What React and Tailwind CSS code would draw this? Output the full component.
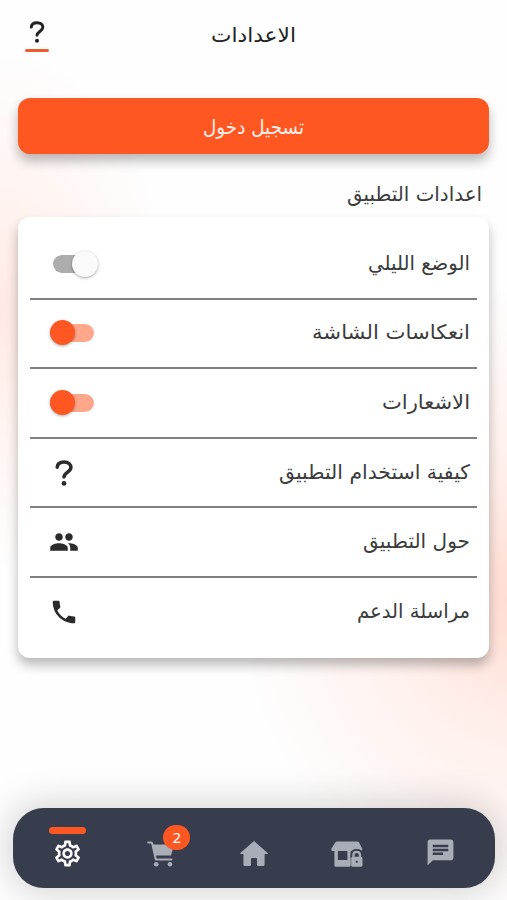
import { MdPeople, MdPhone, MdChat, MdOutlineSettings } from "react-icons/md";

function Txt({ children, className, w }) {
  return (
    <svg className={className} width={w} height="40" overflow="visible">
      <text x={w} y="26" direction="rtl" textAnchor="start" textLength={w} lengthAdjust="spacingAndGlyphs" fill="currentColor">{children}</text>
    </svg>
  );
}

function Question({ className }) {
  return (
    <svg className={className} viewBox="0 0 18 26" fill="none" stroke="currentColor" strokeWidth="3.5" strokeLinecap="round">
      <path d="M2.200 7.200C2.500 3.800 5 2 9 2c4.300 0 6.900 2.300 6.900 5.500 0 4.600-6.900 5.200-6.900 9.400" />
      <circle cx="9" cy="23.400" r="2.400" fill="currentColor" stroke="none" />
    </svg>
  );
}

function Switch({ off }) {
  return (
    <div className={off ? "relative ml-[3px] h-[18px] w-[44px] rounded-full bg-[#adadad]" : "relative h-[18px] w-[44px] rounded-full bg-[#ffa78b]"}>
      <div className={off ? "absolute right-[-1px] -top-1 size-[26px] rounded-full bg-[#fafafa] shadow-[0_1px_3px_rgba(0,0,0,0.35)]" : "absolute left-0 -top-1 size-[25px] rounded-full bg-[#ff5722] shadow-[0_1px_3px_rgba(0,0,0,0.35)]"} />
    </div>
  );
}

function Cart() {
  return (
    <svg className="h-[26px] w-[28px]" viewBox="0 0 28 26" fill="none" stroke="currentColor" strokeWidth="2" strokeLinecap="round" strokeLinejoin="round">
      <path d="M1.200 1.500h2.600q1.200 0 1.500 1.200L8.800 18.500H24.500" />
      <path d="M5.800 4.300H26L23.500 13.800H8.200Z" fill="currentColor" strokeWidth="1.500" />
      <circle cx="9.200" cy="23.200" r="2.300" fill="currentColor" stroke="none" />
      <circle cx="23" cy="23.200" r="2.300" fill="currentColor" stroke="none" />
    </svg>
  );
}

function Home() {
  return (
    <svg className="h-[25px] w-[28px]" viewBox="0 0 28 25" fill="currentColor">
      <path d="M14 0 27.600 12q.8 1-.6 1.100H24.600V23.500q0 1.500-1.500 1.500h-5q-1.100 0-1.100-1.100V18q0-1-1-1h-4q-1 0-1 1v5.900q0 1.100-1.100 1.100h-5q-1.500 0-1.500-1.500V13.100H1q-1.400-.1-.6-1.100Z" />
    </svg>
  );
}

function LockedStore() {
  return (
    <svg className="h-[26px] w-[32px]" viewBox="0 0 32 26">
      <path fill="currentColor" d="M6 .5h20q1.400 0 2.200 1.200L31.100 7.500q.8 2.500-1.600 2.500H2Q-.4 10 .5 7.500L4 1.700Q4.700.5 6 .5ZM3.400 10H6.900v9h9.500v-9h3.300v14.300q0 1.400-1.400 1.400H4.900q-1.500 0-1.500-1.500Z" />
      <path fill="none" stroke="#383d4d" strokeWidth="4.500" d="M21.800 17v-3.300q0-3.500 3.900-3.500t3.900 3.500V17" />
      <path fill="none" stroke="currentColor" strokeWidth="2.200" d="M22.400 17v-3q0-3.200 3.300-3.200t3.300 3.200v3" />
      <rect x="20.200" y="15.800" width="11.300" height="10" rx="1.600" fill="currentColor" />
      <circle cx="25.800" cy="20.800" r="1.100" fill="#383d4d" />
    </svg>
  );
}

const rows = [
  ["الوضع الليلي", 102, <Switch off />],
  ["انعكاسات الشاشة", 158, <Switch />],
  ["الاشعارات", 88, <Switch />],
  ["كيفية استخدام التطبيق", 191, <Question className="ml-[5px] h-[26px] w-[18px]" />],
  ["حول التطبيق", 107, <MdPeople className="-ml-px size-[30px]" />],
  ["مراسلة الدعم", 113, <MdPhone className="-ml-px size-[30px]" />],
];

export default function App() {
  return (
    <div className="flex h-[900px] w-[507px] flex-col overflow-hidden bg-[#fefefe] bg-[radial-gradient(ellipse_170px_260px_at_0px_310px,#ffe9e4,#fff4f1_45%,transparent),radial-gradient(ellipse_280px_310px_at_520px_600px,#ffdbd1,#ffefeb_42%,transparent)] font-['DejaVu_Sans',sans-serif] text-[20px] text-[#3c3c3c]">
      <header className="flex h-[70px] shrink-0 items-start justify-between px-[25px] pt-[16px] text-[#222]">
        <div className="flex w-6 flex-col items-center pt-[5px]">
          <Question className="h-[22px] w-[16px]" />
          <div className="mt-[6px] h-[3px] w-6 rounded bg-[#f15a2e]" />
        </div>
        <Txt w={85}>الاعدادات</Txt>
        <div className="w-6" />
      </header>
      <button className="mx-[18px] mt-[28px] flex h-[56px] shrink-0 items-center justify-center rounded-[12px] bg-[#ff5722] pt-[3px] text-white/90 shadow-[0_7px_12px_rgba(0,0,0,0.28)]">
        <Txt w={101}>تسجيل دخول</Txt>
      </button>
      <div className="mt-[21px] flex h-[42px] shrink-0 justify-end pr-[25px]">
        <Txt w={135}>اعدادات التطبيق</Txt>
      </div>
      <main className="mx-[18px] h-[441px] shrink-0 rounded-[12px] bg-white px-[12px] pt-[13px] text-[#3c3c3c] shadow-[0_7px_12px_rgba(0,0,0,0.28)]">
        {rows.map(([label, w, control], i) => (
          <div key={label}>
            <div className="flex h-[67.600px] items-center justify-between pl-[20px] pr-[7px]">
              <div className="text-[#2b2b2b]">{control}</div>
              <Txt w={w}>{label}</Txt>
            </div>
            {i < 5 && <div className="h-[2px] bg-[#808080]" />}
          </div>
        ))}
      </main>
      <nav className="ml-[13px] mt-[150px] grid h-[80px] w-[482px] shrink-0 grid-cols-5 items-center rounded-[31px] bg-[#383d4d] px-[8px] pt-[11px] text-[#a9adb8] shadow-[0_0_36px_6px_rgba(0,0,0,0.16)]">
        <div className="relative flex justify-center text-white">
          <div className="absolute -top-[11px] h-[6.500px] w-[37px] rounded-full bg-[#ff5722]" />
          <MdOutlineSettings className="size-[31px]" />
        </div>
        <div className="relative flex justify-center">
          <Cart />
          <div className="absolute -top-[16px] left-[49px] flex h-[25px] w-[27px] items-center justify-center rounded-full bg-[#ff5722] font-['Noto_Sans',sans-serif] text-[15px] text-white">2</div>
        </div>
        <div className="flex justify-center"><Home /></div>
        <div className="flex justify-center"><LockedStore /></div>
        <div className="flex justify-center pb-[2px]"><MdChat className="size-[31px]" /></div>
      </nav>
    </div>
  );
}
